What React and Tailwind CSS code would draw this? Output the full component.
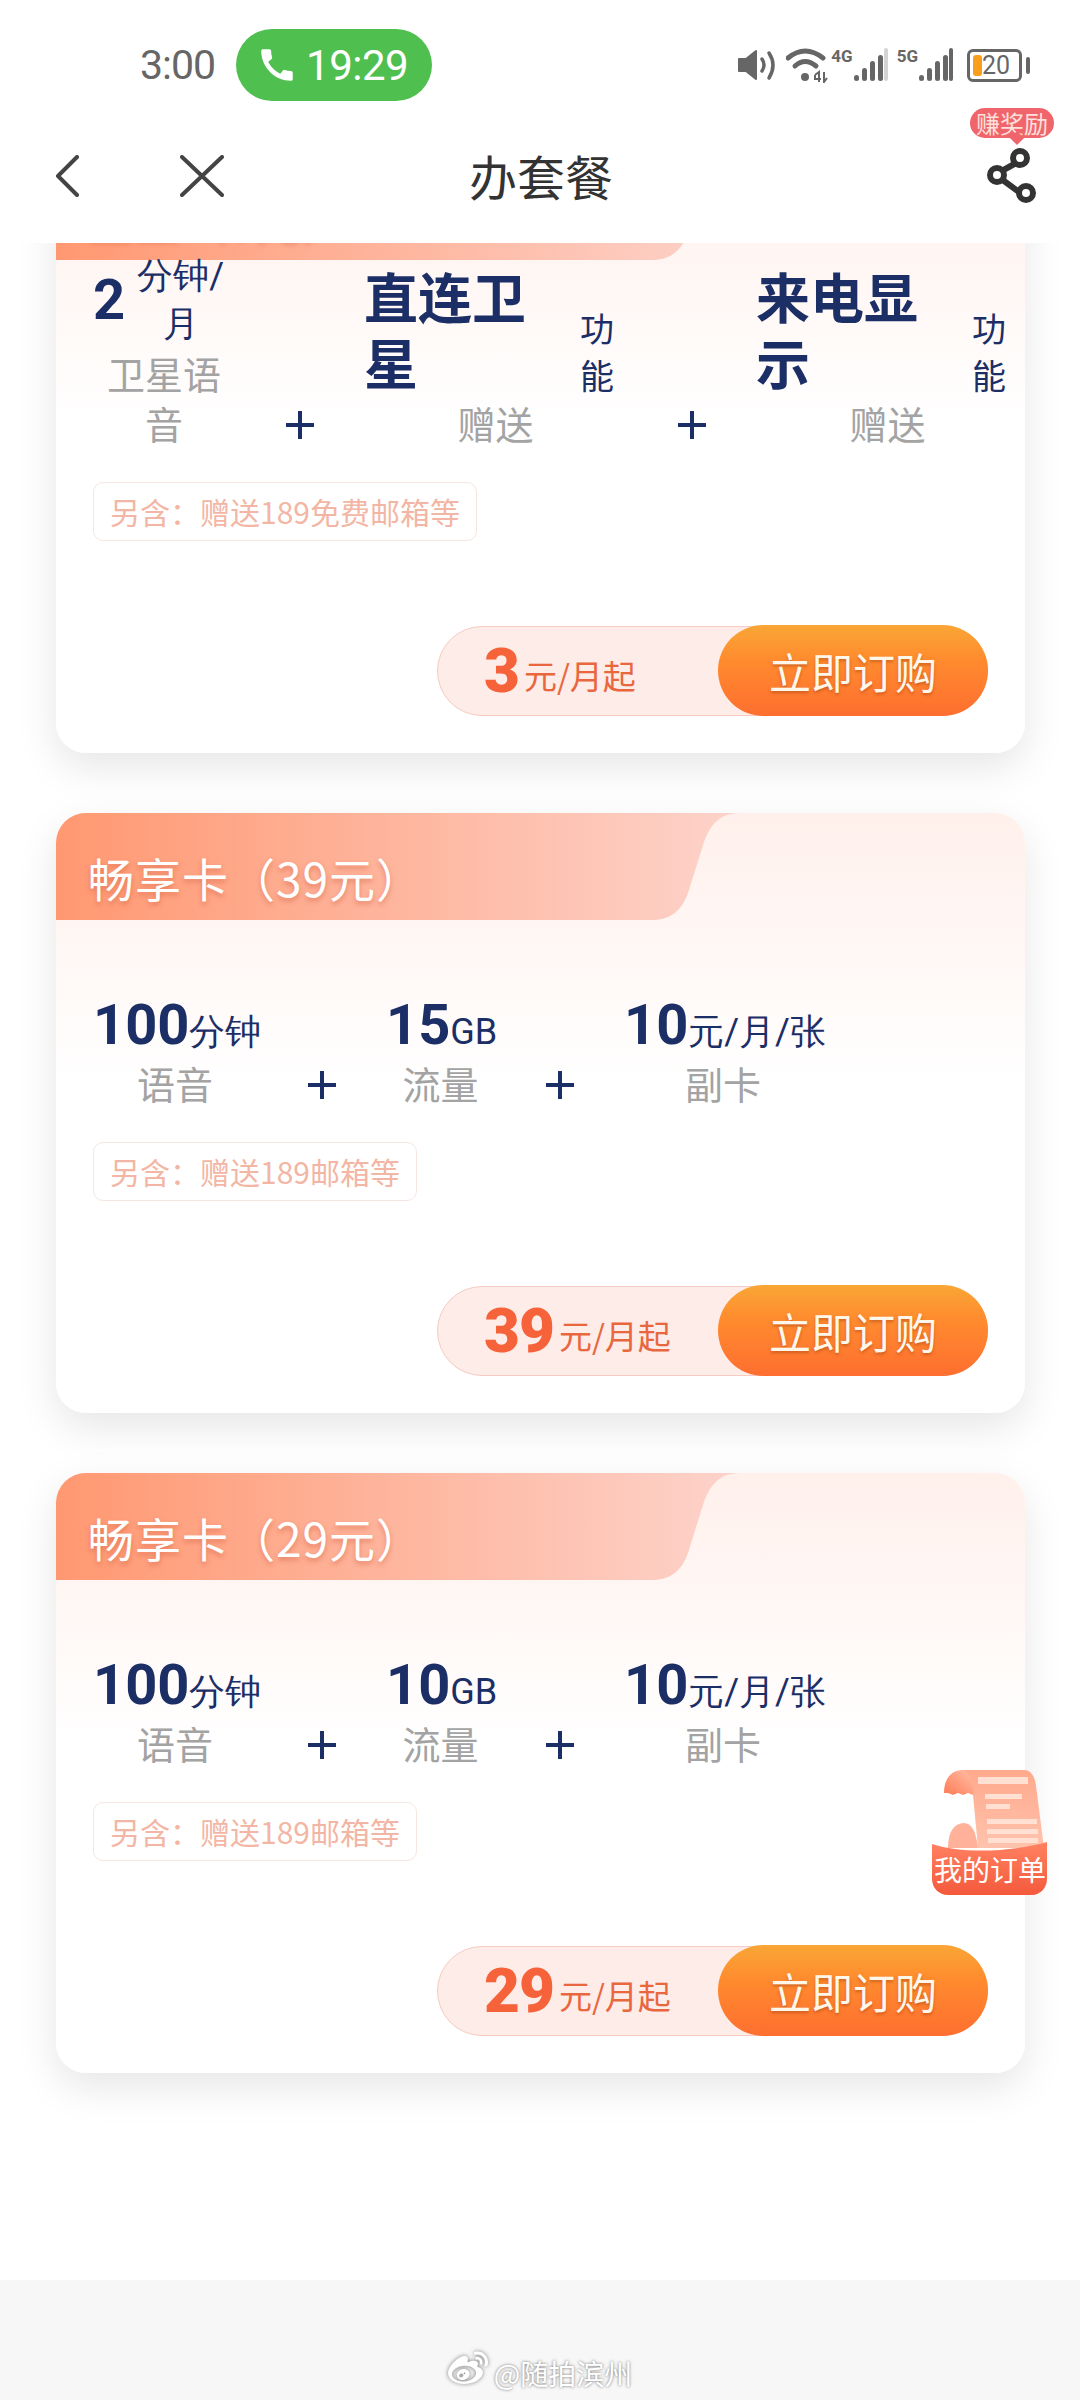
import React from "react";
import { MdCall } from "react-icons/md";
import { FaWeibo } from "react-icons/fa";

const cjk = '"Noto Sans CJK SC", sans-serif';

function SignalBars({ last }) {
  return (
    <svg width="35" height="34" viewBox="0 0 35 34">
      <rect x="1" y="27" width="5" height="6" rx="2.5" fill="#666" />
      <rect x="9" y="20" width="5" height="13" rx="2.5" fill="#666" />
      <rect x="17" y="13" width="5" height="20" rx="2.5" fill="#666" />
      <rect x="25" y="7" width="5" height="26" rx="2.5" fill="#666" />
      <rect x="31" y="0" width="4" height="33" rx="2" fill={last} />
    </svg>
  );
}

function StatusBar() {
  return (
    <div className="flex h-[122px] items-start pt-[29px] pl-[140px]">
      <span className="mt-[11px] text-[41px] leading-[50px] text-[#666] font-['Roboto'] tracking-[-1px]">3:00</span>
      <div className="ml-[21px] flex h-[72px] w-[196px] items-center rounded-[36px] bg-[#4fbf50] pl-[20px] text-white">
        <MdCall size={42} />
        <span className="ml-[8px] text-[42px] tracking-[-0.5px] font-['Roboto']">19:29</span>
      </div>
      <div className="ml-auto flex h-[72px] items-center pr-[50px] text-[#666]">
        <svg width="44" height="36" viewBox="0 0 44 36" fill="none">
          <path d="M1 12 H8 L18 4 V32 L8 24 H1 Z" fill="#666" stroke="#666" strokeWidth="2" strokeLinejoin="round" />
          <path d="M24 12 Q28 18 24 24" stroke="#666" strokeWidth="3.5" strokeLinecap="round" />
          <path d="M31 6 Q39 18 31 31" stroke="#666" strokeWidth="3.5" strokeLinecap="round" />
        </svg>
        <svg className="ml-[4px]" width="42" height="36" viewBox="0 0 42 36" fill="none">
          <path d="M2 11 Q19 -3 37 11" stroke="#666" strokeWidth="5" strokeLinecap="round" />
          <path d="M9 19 Q19 10 30 19" stroke="#666" strokeWidth="5" strokeLinecap="round" />
          <circle cx="19" cy="30" r="4" fill="#666" />
          <path d="M29 28 L33 25 V35 M29 28 V32 H35 M38 25 V35 L41 31" stroke="#666" strokeWidth="2" />
        </svg>
        <span className="mb-[18px] ml-[3px] text-[17px] leading-[18px] font-bold font-['Roboto']">4G</span>
        <SignalBars last="#d4d4d4" />
        <span className="mb-[18px] ml-[9px] text-[17px] leading-[18px] font-bold font-['Roboto']">5G</span>
        <SignalBars last="#666" />
        <div className="ml-[14px] flex h-[33px] w-[55px] items-center rounded-[6px] border-[3px] border-[#666] pl-[3px]">
          <div className="h-[21px] w-[9px] rounded-[3px] bg-[#f99d1c]" />
          <span className="text-[25px] leading-none font-['Roboto']">20</span>
        </div>
        <div className="ml-[4px] h-[17px] w-[4px] rounded-full bg-[#666]" />
      </div>
    </div>
  );
}

function NavBar() {
  return (
    <div className="relative flex h-[121px] items-start">
      <svg className="ml-[55px] mt-[33px]" width="24" height="42" viewBox="0 0 24 42" fill="none">
        <path d="M22 2 L3 21 L22 40" stroke="#444" strokeWidth="4" strokeLinecap="round" strokeLinejoin="round" />
      </svg>
      <svg className="ml-[101px] mt-[33px]" width="44" height="42" viewBox="0 0 44 42" fill="none">
        <path d="M2 2 L42 40 M42 2 L2 40" stroke="#444" strokeWidth="4" strokeLinecap="round" />
      </svg>
      <span className="ml-[245px] mt-[23px] text-[48px] leading-[60px] text-[#333]">办套餐</span>
      <div className="ml-auto mr-[43px] mt-[26px] flex flex-col items-center">
        <svg width="50" height="56" viewBox="0 0 50 56" fill="none">
          <path d="M31 14 L11 25 M13 30 L36 47" stroke="#333" strokeWidth="6" />
          <circle cx="33" cy="10" r="7" stroke="#333" strokeWidth="6" fill="#fff" />
          <circle cx="10" cy="27" r="7" stroke="#333" strokeWidth="6" fill="#fff" />
          <circle cx="39" cy="45" r="7" stroke="#333" strokeWidth="6" fill="#fff" />
        </svg>
      </div>
      <div className="absolute left-[970px] top-[-14px] flex h-[30px] w-[84px] items-center justify-center rounded-[15px] bg-[#f0656b] text-[24px] leading-none text-[#fde0dc]">
        赚奖励
        <div className="absolute bottom-[-5px] left-[42px] h-[10px] w-[10px] rotate-45 bg-[#f0656b]" />
      </div>
    </div>
  );
}

function Spec({ width, num, numClass, unit, unitClass, rowClass, label }) {
  return (
    <div className="flex flex-col items-center" style={{ width }}>
      <div className={"flex w-full " + (rowClass || "items-baseline")}>
        <span className={"font-bold text-[#1c2e66] " + numClass}>{num}</span>
        <span className={"text-[#1c2e66] " + unitClass}>{unit}</span>
      </div>
      <div className="pb-[3px] text-center text-[38px] leading-[50px] text-[#a3a3a3]">{label}</div>
    </div>
  );
}

function Plus() {
  return (
    <div className="flex h-[53px] w-[129px] shrink-0 items-center justify-center">
      <svg width="30" height="30" viewBox="0 0 30 30">
        <path d="M15 1 V29 M1 15 H29" stroke="#1c2e66" strokeWidth="4" />
      </svg>
    </div>
  );
}

function Card({ title, specs, extra, price }) {
  return (
    <div className="relative flex h-[600px] w-[969px] shrink-0 flex-col justify-end overflow-hidden rounded-[30px] bg-gradient-to-b from-[#fff0eb] to-white to-[45%] pb-[37px] pl-[37px] pr-[37px]">
      <svg className="absolute left-0 top-0" width="690" height="107" viewBox="0 0 690 107">
        <defs>
          <linearGradient id="bannerFill" x1="0" y1="0" x2="1" y2="0">
            <stop offset="0" stopColor="#ff9871" />
            <stop offset="1" stopColor="#fdd3cb" />
          </linearGradient>
        </defs>
        <path d="M0 0 H684 C662 0 653 14 647 32 L632 80 C626 97 615 107 596 107 H0 Z" fill="url(#bannerFill)" />
      </svg>
      <div className="absolute left-[32px] top-[33px] text-[46px] leading-[62px] tracking-[1px] text-white [text-shadow:0_3px_5px_rgba(200,80,50,0.45)]">
        {title}
      </div>
      <div className="relative flex items-end">{specs}</div>
      <div className="relative mt-[31px] flex h-[59px] self-start items-center rounded-[10px] border border-[#f6e6e1] px-[16px] text-[30px] text-[#f3b6a4]">
        {extra}
      </div>
      <div className="relative mt-[85px] flex h-[90px] w-[551px] self-end items-center rounded-[45px] border border-[#f5cbc2] bg-[#fdece8]">
        <span className="ml-[46px] text-[62px] font-black leading-none tracking-[-1px] text-[#f6623a] font-['Roboto']">{price}</span>
        <span className="ml-[5px] mt-[10px] text-[33px] text-[#e9673f]">元/月起</span>
        <div className="absolute right-[-1px] top-[-2px] flex h-[91px] w-[270px] items-center justify-center rounded-[46px] bg-gradient-to-b from-[#f9a635] via-[#ff8a2e] via-[40%] to-[#fe6e30] text-[42px] text-[#fff7ea] [text-shadow:0_2px_3px_rgba(170,70,20,0.55)]">
          立即订购
        </div>
      </div>
    </div>
  );
}

const bigNum = "text-[56px] leading-[66px] font-['Roboto']";
const smallUnit = "whitespace-nowrap text-[36px] leading-[48px] font-['Roboto']";

function planSpecs(gb) {
  return (
    <>
      <Spec width="164px" num="100" numClass={bigNum} unit="分钟" unitClass={smallUnit} label="语音" />
      <Plus />
      <Spec width="109px" num={gb} numClass={bigNum} unit="GB" unitClass={smallUnit} label="流量" />
      <Plus />
      <Spec width="198px" num="10" numClass={bigNum} unit="元/月/张" unitClass={smallUnit} label="副卡" />
    </>
  );
}

function OrderButton() {
  return (
    <div className="absolute left-[932px] top-[1770px] z-10 h-[125px] w-[116px]">
      <svg className="absolute left-0 top-0" width="116" height="125" viewBox="0 0 116 125">
        <defs>
          <linearGradient id="paperFill" x1="0" y1="0" x2="0" y2="1">
            <stop offset="0" stopColor="#ffa98c" />
            <stop offset="1" stopColor="#ffc3ad" />
          </linearGradient>
          <linearGradient id="curlFill" x1="1" y1="0" x2="0" y2="1">
            <stop offset="0" stopColor="#ffc0a8" />
            <stop offset="1" stopColor="#ff7a55" />
          </linearGradient>
          <linearGradient id="pocketFill" x1="0" y1="0" x2="0" y2="1">
            <stop offset="0" stopColor="#ff8262" />
            <stop offset="1" stopColor="#f4593c" />
          </linearGradient>
        </defs>
        <path d="M30 0 H92 C100 0 103 8 104 16 L112 78 H46 L41 25 C40 10 36 2 30 0 Z" fill="url(#paperFill)" />
        <path d="M12 23 C12 8 20 0 30 0 C38 2 43 14 41 25 L36 23 L31 25 L26 23 L21 25 L16 23 Z" fill="url(#curlFill)" />
        <path d="M16 78 C16 62 22 53 32 53 C40 53 44 62 46 78 Z" fill="#ffb299" />
        <g fill="#ffe0d3">
          <rect x="46" y="7" width="50" height="7" />
          <rect x="53" y="24" width="37" height="5" />
          <rect x="54" y="34" width="24" height="5" />
          <rect x="55" y="49" width="50" height="5" />
          <rect x="55" y="59" width="51" height="5" />
          <rect x="56" y="68" width="50" height="5" />
        </g>
        <path d="M0 74 C30 84 80 82 115 72 V109 C115 118 108 125 100 125 H16 C7 125 0 118 0 109 Z" fill="url(#pocketFill)" />
      </svg>
      <div className="absolute bottom-[8px] left-0 right-0 whitespace-nowrap text-center text-[28px] leading-[36px] text-white">我的订单</div>
    </div>
  );
}

export default function App() {
  return (
    <div className="relative flex h-[2400px] w-[1080px] flex-col overflow-hidden bg-white" style={{ fontFamily: cjk }}>
      <div className="relative z-10 bg-white">
        <StatusBar />
        <NavBar />
      </div>
      <div className="flex flex-1 flex-col gap-[60px] overflow-hidden pl-[56px]">
        <div className="mt-[-90px] w-[969px] rounded-[30px] shadow-[0_14px_40px_rgba(0,0,0,0.1)]">
          <Card
            title="卫星（3元）"
            price="3"
            extra="另含：赠送189免费邮箱等"
            specs={
              <>
                <Spec
                  width="142px"
                  num="2"
                  numClass="text-[56px] leading-[66px] font-['Roboto']"
                  unit="分钟/月"
                  unitClass="w-[112px] pl-[1px] text-center text-[36px] leading-[48px] font-['Roboto']"
                  rowClass="items-center"
                  label="卫星语音"
                />
                <Plus />
                <Spec
                  width="263px"
                  num="直连卫星"
                  numClass="mb-[3px] w-[201px] shrink-0 text-[54px] leading-[66px]"
                  unit="功能"
                  unitClass="w-[62px] text-[34px] leading-[47px] pl-[15px]"
                  rowClass="items-end"
                  label="赠送"
                />
                <Plus />
                <Spec
                  width="264px"
                  num="来电显示"
                  numClass="mb-[3px] w-[201px] shrink-0 text-[54px] leading-[66px]"
                  unit="功能"
                  unitClass="w-[62px] text-[34px] leading-[47px] pl-[15px]"
                  rowClass="items-end"
                  label="赠送"
                />
              </>
            }
          />
        </div>
        <div className="w-[969px] rounded-[30px] shadow-[0_14px_40px_rgba(0,0,0,0.1)]">
          <Card title="畅享卡（39元）" price="39" extra="另含：赠送189邮箱等" specs={planSpecs("15")} />
        </div>
        <div className="w-[969px] rounded-[30px] shadow-[0_14px_40px_rgba(0,0,0,0.1)]">
          <Card title="畅享卡（29元）" price="29" extra="另含：赠送189邮箱等" specs={planSpecs("10")} />
        </div>
      </div>
      <OrderButton />
      <div className="flex h-[120px] items-end justify-center bg-[#f7f7f7] pb-[9px] text-white">
        <FaWeibo size={40} className="mb-[2px] mr-[6px] [filter:drop-shadow(0_0_2px_rgba(90,90,90,0.8))]" />
        <span className="text-[28px] leading-[36px] [text-shadow:0_0_3px_rgba(60,60,60,0.75)]">@随拍滨州</span>
      </div>
    </div>
  );
}
